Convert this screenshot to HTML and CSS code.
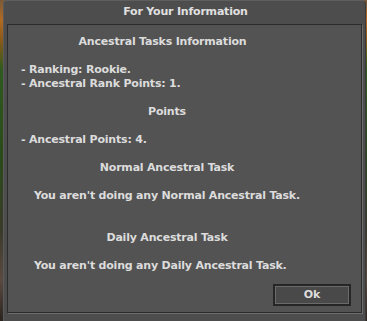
FILE: index.html
```html
<!DOCTYPE html>
<html>
<head>
<meta charset="utf-8">
<link rel="stylesheet" href="styles.css">
</head>
<body>
<div class="window">
  <div class="titlebar">For Your Information</div>
  <div class="panel">
    <div class="text">
      <p class="heading heading-main">Ancestral Tasks Information</p>
      <p class="item gap1">- Ranking: Rookie.</p>
      <p class="item">- Ancestral Rank Points: 1.</p>
      <p class="heading gap1">Points</p>
      <p class="item gap1">- Ancestral Points: 4.</p>
      <p class="heading gap1">Normal Ancestral Task</p>
      <p class="note gap1">You aren't doing any Normal Ancestral Task.</p>
      <p class="heading gap2">Daily Ancestral Task</p>
      <p class="note gap1">You aren't doing any Daily Ancestral Task.</p>
    </div>
    <div class="actions">
      <button class="btn">Ok</button>
    </div>
  </div>
</div>
</body>
</html>
```
FILE: styles.css
```css
html, body {
  margin: 0;
  padding: 0;
}
body {
  width: 367px;
  height: 321px;
  overflow: hidden;
  background: linear-gradient(to bottom, #7a5a3a 0px, #b06a22 20px, #8a5a1a 40px, #2f5a1e 70px, #2a4a1a 160px, #3a3a2a 230px, #5a4a40 280px, #2a2420 321px);
  font-family: "DejaVu Sans", Verdana, sans-serif;
  font-weight: bold;
  font-size: 11px;
  letter-spacing: -0.2px;
  color: #dcdcdc;
}
.window {
  margin-left: 3px;
  width: 363px;
  height: 323px;
  box-sizing: border-box;
  background: #4d4d4d;
  border-radius: 4px 4px 0 0;
  border-top: 1px solid #5e5e5e;
  border-left: 1px solid #5a5a5a;
  border-right: 1px solid #3a3a3a;
  display: flex;
  flex-direction: column;
}
.titlebar {
  height: 23px;
  line-height: 22px;
  text-align: center;
  color: #e0e0e0;
  padding-left: 2px;
}
.panel {
  margin-left: 3px;
  width: 355px;
  height: 289px;
  box-sizing: border-box;
  background: #535353;
  border: 1px solid #2c2c2c;
  box-shadow: 1px 1px 0 #6c6c6c;
  display: flex;
  flex-direction: column;
}
.text {
  margin-top: 10px;
  margin-left: 13px;
  width: 292px;
}
.text p {
  margin: 0;
  height: 14px;
  line-height: 14px;
  white-space: nowrap;
}
.heading {
  text-align: center;
}
.heading-main {
  padding-right: 9px;
}
.note {
  padding-left: 13px;
}
.gap1 {
  margin-top: 14px !important;
}
.gap2 {
  margin-top: 28px !important;
}
.actions {
  margin-top: auto;
  margin-bottom: 6px;
  margin-right: 10px;
  display: flex;
  justify-content: flex-end;
}
.btn {
  width: 78px;
  height: 22px;
  box-sizing: border-box;
  padding: 0;
  background: #494949;
  border: 2px solid #262626;
  box-shadow: inset 1px 1px 0 #6a6a6a, inset -1px -1px 0 #6a6a6a;
  color: #dcdcdc;
  font-family: "DejaVu Sans", Verdana, sans-serif;
  font-weight: bold;
  font-size: 11px;
  letter-spacing: -0.2px;
  line-height: 18px;
}
```
